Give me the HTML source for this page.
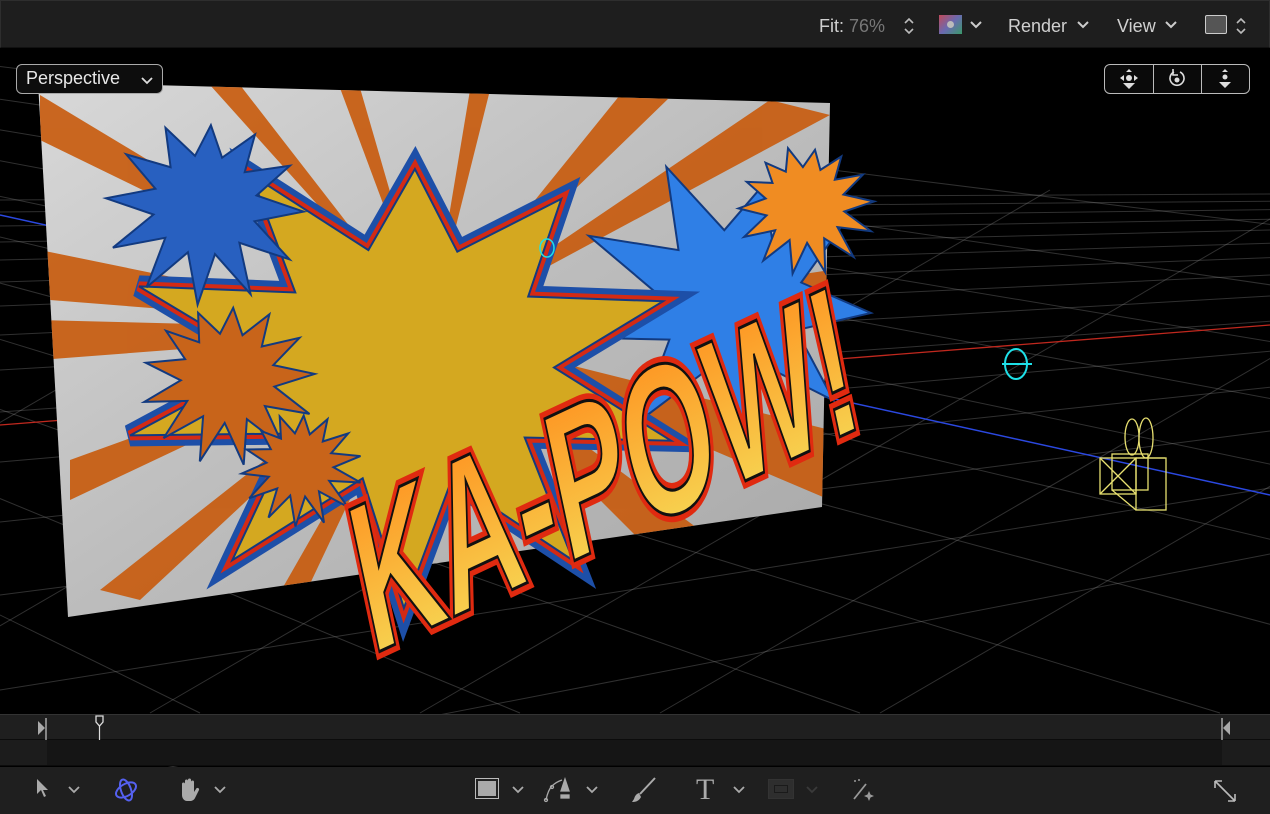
<!DOCTYPE html>
<html><head><meta charset="utf-8">
<style>
*{margin:0;padding:0;box-sizing:border-box}
body{width:1270px;height:814px;background:#000;overflow:hidden;font-family:"Liberation Sans",sans-serif;position:relative}
#top{position:absolute;left:0;top:0;width:1270px;height:48px;background:#1e1e1e;border:1px solid #2e2e2e;border-bottom:1px solid #111}
.t{position:absolute;top:15px;font-size:18px;color:#d0d0d0}
#tl1{position:absolute;left:0;top:714px;width:1270px;height:26px;background:#1f1f1f;border-top:1px solid #333;border-bottom:1px solid #0c0c0c}
#tl2{position:absolute;left:0;top:740px;width:1270px;height:26px;background:#151515;border-bottom:1px solid #0c0c0c}
#tb{position:absolute;left:0;top:767px;width:1270px;height:47px;background:#1f1f1f}
#persp{position:absolute;left:16px;top:64px;width:147px;height:30px;border:1px solid #aaa;border-radius:6px;background:#0d0d0d;color:#e8e8e8;font-size:18px;padding:3px 0 0 9px}
#seg{position:absolute;left:1104px;top:64px;width:146px;height:30px;border:1px solid #bbb;border-radius:6px;background:#0a0a0a}
</style></head><body>
<svg id="scene" width="1270" height="814" style="position:absolute;left:0;top:0">
<defs>
<linearGradient id="pg" x1="0" y1="0" x2="1" y2="1"><stop offset="0" stop-color="#d8d8d8"/><stop offset=".5" stop-color="#bdbdbd"/><stop offset="1" stop-color="#a8a8a8"/></linearGradient>
<linearGradient id="tg" x1="0" y1="0" x2="0" y2="1"><stop offset="0" stop-color="#ff8a1a"/><stop offset="1" stop-color="#f5e05a"/></linearGradient>
<clipPath id="pc"><polygon points="38,82 830,103 822,507 68,617"/></clipPath>
</defs>
<g id="grid" stroke="#8a8a8a" stroke-opacity=".35" stroke-width="1" fill="none"></g>
<line x1="0" y1="425" x2="1270" y2="325" stroke="#c0281e" stroke-width="1.3"/>
<line x1="0" y1="215" x2="1270" y2="495" stroke="#2b48e0" stroke-width="1.5"/>
<polygon points="38,82 830,103 822,507 68,617" fill="url(#pg)"/>
<g clip-path="url(#pc)" fill="#c85a0c" opacity=".9">
<polygon points="430,330 40,95 40,140"/><polygon points="430,330 40,250 50,300"/>
<polygon points="430,330 70,460 70,500"/><polygon points="430,330 100,590 140,600"/>
<polygon points="430,330 210,85 240,85"/><polygon points="430,330 340,88 360,88"/>
<polygon points="430,330 470,90 490,90"/><polygon points="430,330 620,95 670,97"/>
<polygon points="430,330 770,100 830,115"/><polygon points="430,330 830,270 830,295"/>
<polygon points="430,330 830,430 830,500"/><polygon points="430,330 660,560 720,545"/>
<polygon points="430,330 40,320 40,360"/><polygon points="430,330 270,610 300,605"/>
</g>
<g id="stars"></g>
<g transform="translate(372,655) rotate(-25) skewX(-13)">
<text font-family="Liberation Sans Narrow, Liberation Sans, sans-serif" font-weight="bold" font-size="205" textLength="545" lengthAdjust="spacingAndGlyphs" fill="url(#tg)" stroke="#e02a10" stroke-width="14" paint-order="stroke">KA-POW!</text>
<text font-family="Liberation Sans Narrow, Liberation Sans, sans-serif" font-weight="bold" font-size="205" textLength="545" lengthAdjust="spacingAndGlyphs" fill="none" stroke="#111" stroke-width="3">KA-POW!</text>
</g>
<ellipse cx="547" cy="248" rx="7" ry="9" fill="none" stroke="#1ee0e8" stroke-width="1.5"/>
<ellipse cx="1016" cy="364" rx="11" ry="15" fill="none" stroke="#1ee0e8" stroke-width="2"/>
<line x1="1002" y1="364" x2="1032" y2="364" stroke="#1ee0e8" stroke-width="2"/>
<g fill="none" stroke="#e8e070" stroke-width="1.3">
<ellipse cx="1132" cy="437" rx="7" ry="18"/><ellipse cx="1146" cy="438" rx="7" ry="20"/>
<rect x="1100" y="458" width="36" height="36"/><rect x="1112" y="454" width="36" height="36"/>
<line x1="1136" y1="458" x2="1165" y2="458"/><rect x="1136" y="458" width="30" height="52"/>
<line x1="1100" y1="458" x2="1136" y2="494"/><line x1="1136" y1="458" x2="1100" y2="494"/>
<line x1="1112" y1="490" x2="1136" y2="510"/>
</g>
</svg>
<div id="top">
<span class="t" style="left:818px">Fit: <span style="color:#777">76%</span></span>
<svg style="position:absolute;left:902px;top:15px" width="12" height="20"><path d="M2 7l4-4 4 4M2 13l4 4 4-4" stroke="#bbb" stroke-width="1.6" fill="none"/></svg>
<div style="position:absolute;left:938px;top:14px;width:23px;height:19px;background:linear-gradient(135deg,#c04a5a,#6a6ab0 50%,#3a9a6a);"><div style="position:absolute;left:8px;top:6px;width:7px;height:7px;border-radius:50%;background:#bbb"></div></div>
<svg style="position:absolute;left:969px;top:19px" width="12" height="10"><path d="M1 2l5 5 5-5" stroke="#ccc" stroke-width="2" fill="none"/></svg>
<span class="t" style="left:1007px">Render</span>
<svg style="position:absolute;left:1076px;top:19px" width="12" height="10"><path d="M1 2l5 5 5-5" stroke="#ccc" stroke-width="2" fill="none"/></svg>
<span class="t" style="left:1116px">View</span>
<svg style="position:absolute;left:1164px;top:19px" width="12" height="10"><path d="M1 2l5 5 5-5" stroke="#ccc" stroke-width="2" fill="none"/></svg>
<div style="position:absolute;left:1204px;top:14px;width:22px;height:19px;border:1.5px solid #ccc;background:#555;border-radius:2px"></div>
<svg style="position:absolute;left:1234px;top:15px" width="12" height="20"><path d="M2 7l4-4 4 4M2 13l4 4 4-4" stroke="#bbb" stroke-width="1.6" fill="none"/></svg>
</div>
<div id="persp">Perspective <svg style="position:absolute;left:124px;top:11px" width="12" height="9"><path d="M1 2l5 5 5-5" stroke="#ddd" stroke-width="1.8" fill="none"/></svg></div>
<div id="seg">
<div style="position:absolute;left:48px;top:0;width:1px;height:28px;background:#bbb"></div>
<div style="position:absolute;left:96px;top:0;width:1px;height:28px;background:#bbb"></div>
<svg style="position:absolute;left:12px;top:3px" width="24" height="22" fill="#ddd"><circle cx="12" cy="10" r="3"/><path d="M3 10l4-3v6zM21 10l-4-3v6zM12 1l-3 3h6zM6 15h12l-6 6z"/></svg>
<svg style="position:absolute;left:60px;top:3px" width="24" height="22"><path d="M9 4a7 7 0 1 0 6 0" stroke="#ddd" stroke-width="1.6" fill="none"/><path d="M8 1v6h5" stroke="#ddd" stroke-width="1.6" fill="none"/><circle cx="12" cy="12" r="2.5" fill="#ddd"/></svg>
<svg style="position:absolute;left:108px;top:3px" width="24" height="22" fill="#ddd"><circle cx="12" cy="9" r="2.5"/><path d="M12 1l-3 3h6zM6 14h12l-6 6z"/></svg>
</div>
<div id="tl1">
<svg style="position:absolute;left:36px;top:3px" width="12" height="22"><path d="M2 3l7 7-7 7z" fill="#aaa"/><line x1="10" y1="0" x2="10" y2="22" stroke="#ccc" stroke-width="1.2"/></svg>
<svg style="position:absolute;left:94px;top:0" width="12" height="26"><path d="M2 1h7v6l-3.5 4l-3.5-4z" fill="none" stroke="#ddd" stroke-width="1.3"/><line x1="5.5" y1="11" x2="5.5" y2="26" stroke="#ddd" stroke-width="1.2"/></svg>
<svg style="position:absolute;left:1220px;top:3px" width="12" height="22"><line x1="2" y1="0" x2="2" y2="22" stroke="#ccc" stroke-width="1.2"/><path d="M10 3l-7 7 7 7z" fill="#aaa"/></svg>
</div>
<div id="tl2"><div style="position:absolute;left:0;top:0;width:47px;height:25px;background:#1c1c1c"></div><div style="position:absolute;left:1222px;top:0;width:48px;height:25px;background:#1c1c1c"></div></div>
<div id="tb">
<svg style="position:absolute;left:34px;top:11px" width="16" height="22"><path d="M3 1v15l4-4 3 7 2-1-3-6h5z" fill="#aaa"/></svg>
<svg style="position:absolute;left:68px;top:18px" width="12" height="9"><path d="M1 2l5 5 5-5" stroke="#aaa" stroke-width="1.8" fill="none"/></svg>
<svg style="position:absolute;left:112px;top:9px" width="28" height="28" fill="none" stroke="#5561f0" stroke-width="2"><ellipse cx="14" cy="14" rx="11" ry="6" transform="rotate(-30 14 14)"/><ellipse cx="14" cy="14" rx="5" ry="11" transform="rotate(-20 14 14)"/></svg>
<svg style="position:absolute;left:178px;top:10px" width="24" height="26" fill="#aaa"><path d="M4 12V7a1.5 1.5 0 0 1 3 0v5V4a1.5 1.5 0 0 1 3 0v8V3a1.5 1.5 0 0 1 3 0v9V5a1.5 1.5 0 0 1 3 0v10l2-3a1.5 1.5 0 0 1 3 1l-4 8c-1 2-3 3-5 3h-3c-3 0-5-3-5-6z"/></svg>
<svg style="position:absolute;left:214px;top:18px" width="12" height="9"><path d="M1 2l5 5 5-5" stroke="#aaa" stroke-width="1.8" fill="none"/></svg>
<div style="position:absolute;left:475px;top:11px;width:24px;height:21px;border:1.5px solid #bbb;background:#aaa;box-shadow:inset 0 0 0 2px #222"></div>
<svg style="position:absolute;left:512px;top:18px" width="12" height="9"><path d="M1 2l5 5 5-5" stroke="#aaa" stroke-width="1.8" fill="none"/></svg>
<svg style="position:absolute;left:543px;top:9px" width="36" height="28" fill="none" stroke="#aaa" stroke-width="1.3"><path d="M3 24q2-10 6-14t10-6"/><circle cx="3" cy="24" r="1.5"/><circle cx="9" cy="11" r="1.5"/><path d="M22 3l-4 12h8z" fill="#aaa"/><rect x="18" y="19" width="8" height="3" fill="#aaa"/></svg>
<svg style="position:absolute;left:586px;top:18px" width="12" height="9"><path d="M1 2l5 5 5-5" stroke="#aaa" stroke-width="1.8" fill="none"/></svg>
<svg style="position:absolute;left:631px;top:10px" width="26" height="26"><path d="M24 1L9 17" stroke="#aaa" stroke-width="2"/><path d="M8 16c-3 1-4 3-5 6l-2 3c4 0 7-1 9-5z" fill="#aaa"/></svg>
<span style="position:absolute;left:696px;top:6px;font-family:'Liberation Serif',serif;font-size:30px;color:#aaa">T</span>
<svg style="position:absolute;left:733px;top:18px" width="12" height="9"><path d="M1 2l5 5 5-5" stroke="#aaa" stroke-width="1.8" fill="none"/></svg>
<div style="position:absolute;left:768px;top:12px;width:26px;height:20px;background:#2e2e2e;border:1px solid #333"><div style="position:absolute;left:5px;top:5px;width:14px;height:8px;border:1.5px solid #1a1a1a"></div></div>
<svg style="position:absolute;left:806px;top:18px" width="12" height="9"><path d="M1 2l5 5 5-5" stroke="#3a3a3a" stroke-width="1.8" fill="none"/></svg>
<svg style="position:absolute;left:850px;top:10px" width="26" height="26" fill="#999"><path d="M4 22L16 7" stroke="#999" stroke-width="1.8"/><path d="M19 14l1.5 3.5 3.5 1.5-3.5 1.5-1.5 3.5-1.5-3.5-3.5-1.5 3.5-1.5z"/><circle cx="5" cy="4" r="1"/><circle cx="9" cy="3" r="1"/></svg>
<svg style="position:absolute;left:1213px;top:12px" width="26" height="26" fill="none" stroke="#bbb" stroke-width="1.6"><path d="M2 2l20 20M2 2h7M2 2v7M22 22h-7M22 22v-7"/></svg>
</div>
<script>
var ns="http://www.w3.org/2000/svg";
var g=document.getElementById('grid');
function L(a,b,c,d){var l=document.createElementNS(ns,'line');l.setAttribute('x1',a);l.setAttribute('y1',b);l.setAttribute('x2',c);l.setAttribute('y2',d);g.appendChild(l);}
[200,212,226,242,260,282,306,335,370,412,462,522,595,690,800].forEach(function(y){L(0,y,1270,185+(y-185)*0.6);});
var V=[-1500,-120];
[-400,-100,200,520,860,1220,1600,2000,2450,2950,3500,4200,5200].forEach(function(xb){L(V[0],V[1],xb,713);});
[-200,150,450,720,960,1180].forEach(function(x){L(x+600,190,x-300,713);});
var s=document.getElementById('stars');
function star(cx,cy,r1,r2,n,rot,fill,strokes,sx){
 sx=sx||1.05;
 var pts=[];for(var i=0;i<n*2;i++){var r=i%2?r2:r1*(0.8+0.2*Math.abs(Math.sin(i*1.7)));var a=rot+i*Math.PI/n;pts.push((cx+r*Math.cos(a)*sx).toFixed(1)+','+(cy+r*Math.sin(a)).toFixed(1));}
 strokes.forEach(function(st){var p=document.createElementNS(ns,'polygon');p.setAttribute('points',pts.join(' '));p.setAttribute('fill','none');p.setAttribute('stroke',st[0]);p.setAttribute('stroke-width',st[1]);s.appendChild(p);});
 var p=document.createElementNS(ns,'polygon');p.setAttribute('points',pts.join(' '));p.setAttribute('fill',fill);p.setAttribute('stroke','#123a80');p.setAttribute('stroke-width','2');s.appendChild(p);
}
star(730,300,150,70,9,-1.3,'#2f7fe6',[]);
star(410,365,245,120,10,-1.55,'#d4a820',[['#1d4fa8',22],['#d42a14',10]],1.2);
star(205,205,100,50,12,-1.5,'#2860c0',[]);
star(805,205,70,38,14,-1.4,'#f08c22',[]);
star(228,378,88,45,13,-1.5,'#c8641a',[]);
star(300,465,62,32,14,-1.5,'#c8641a',[]);
</script>
</body></html>
